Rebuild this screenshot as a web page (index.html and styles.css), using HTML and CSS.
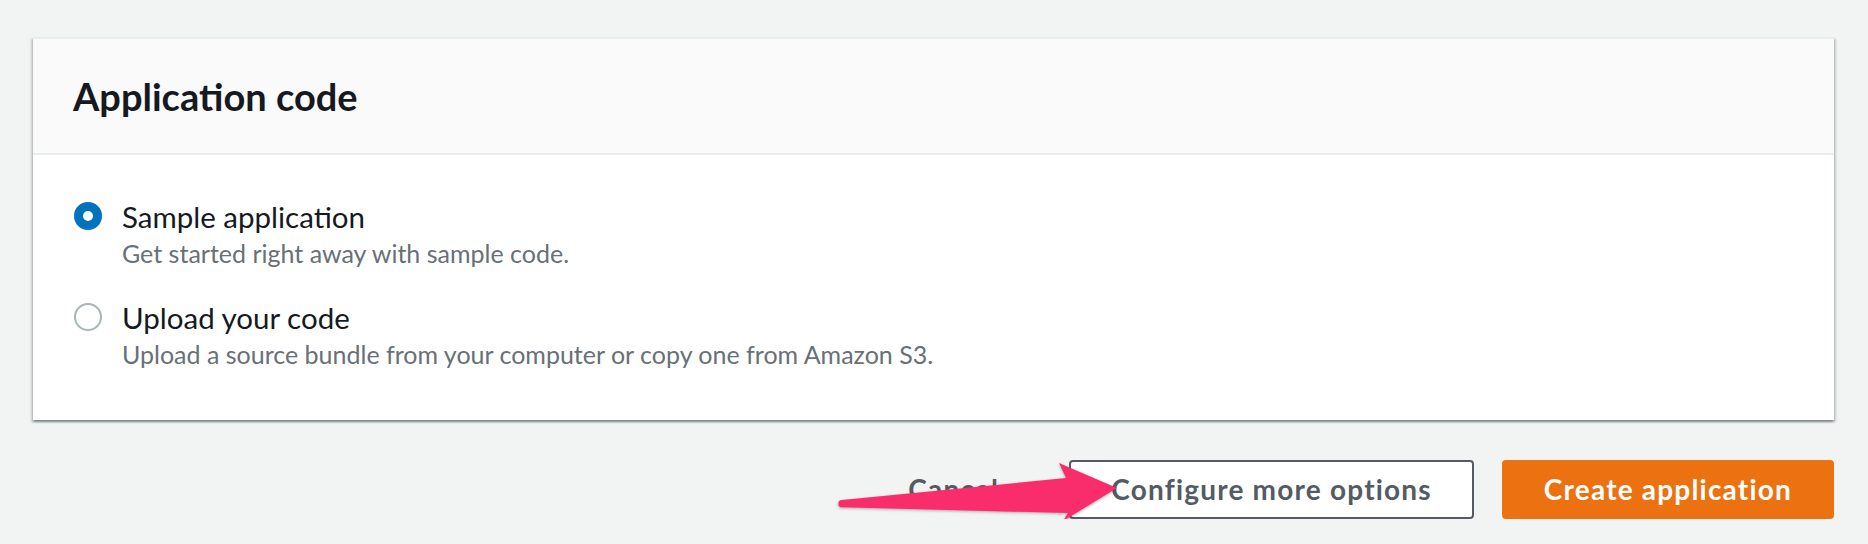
FILE: index.html
```html
<!DOCTYPE html>
<html lang="en">
<head>
<meta charset="utf-8">
<title>Application code</title>
<link rel="stylesheet" href="styles.css">
</head>
<body>
<div class="page">
  <section class="card">
    <header class="card-header">
      <h2 class="card-title">Application code</h2>
    </header>
    <div class="card-body">
      <div class="option">
        <span class="radio radio-checked"></span>
        <span class="option-text">
          <span class="option-label">Sample application</span>
          <span class="option-desc">Get started right away with sample code.</span>
        </span>
      </div>
      <div class="option">
        <span class="radio"></span>
        <span class="option-text">
          <span class="option-label">Upload your code</span>
          <span class="option-desc">Upload a source bundle from your computer or copy one from Amazon S3.</span>
        </span>
      </div>
    </div>
  </section>
  <div class="actions">
    <button class="btn btn-link">Cancel</button>
    <button class="btn btn-normal">Configure more options</button>
    <button class="btn btn-primary">Create application</button>
  </div>
  <svg class="arrow" width="300" height="75" viewBox="830 455 300 75" aria-hidden="true">
    <path d="M842 500 L1066 478 L1059 463 L1117 488 L1063 521 L1068 513 L842 507.3 A3.6 3.6 0 0 1 842 500 Z" fill="#fa2d6c"/>
  </svg>
</div>
</body>
</html>
```
FILE: styles.css
```css
html, body {
  margin: 0;
  padding: 0;
  background: #f2f3f3;
}

body {
  font-family: Lato, "Open Sans", "Liberation Sans", sans-serif;
  color: #16191f;
}

.page {
  position: relative;
  padding: 37px 34px 0 33px;
}

.card {
  background: #ffffff;
  border-top: 2px solid #eaeded;
  box-shadow: 0 2px 2px 0 rgba(0, 28, 36, 0.3),
              2px 2px 2px 0 rgba(0, 28, 36, 0.15),
              -2px 2px 2px 0 rgba(0, 28, 36, 0.15);
}

.card-header {
  background: #fafafa;
  border-bottom: 2px solid #eaeded;
  padding: 35px 40px;
}

.card-title {
  margin: 0;
  font-size: 38px;
  line-height: 44px;
  font-weight: 700;
  color: #16191f;
}

.card-body {
  padding: 40px 40px 52px 41px;
  display: flex;
  flex-direction: column;
  gap: 29px;
}

.option {
  display: flex;
  align-items: flex-start;
  gap: 20px;
}

.radio {
  flex: none;
  box-sizing: border-box;
  width: 28px;
  height: 28px;
  margin-top: 7px;
  border-radius: 50%;
  border: 2px solid #aab7b8;
  background: #ffffff;
}

.radio-checked {
  border: 9px solid #0073bb;
}

.option-text {
  display: flex;
  flex-direction: column;
}

.option-label {
  font-size: 29.5px;
  line-height: 44px;
  color: #16191f;
}

.option-desc {
  font-size: 25px;
  line-height: 28px;
  color: #687078;
}

.actions {
  margin-top: 40px;
  display: flex;
  justify-content: flex-end;
  gap: 28px;
}

.btn {
  font-family: Lato, "Open Sans", "Liberation Sans", sans-serif;
  font-size: 28px;
  font-weight: 700;
  letter-spacing: 1.2px;
  line-height: 43px;
  padding: 6px 40px;
  border: 2px solid transparent;
  border-radius: 4px;
  background: transparent;
  color: #545b64;
  cursor: pointer;
}

.btn-normal {
  background: #ffffff;
  border-color: #545b64;
}

.btn-primary {
  background: #ec7211;
  border-color: #ec7211;
  color: #ffffff;
}

.arrow {
  position: absolute;
  left: 830px;
  top: 455px;
  filter: drop-shadow(0 1px 1.5px rgba(0, 0, 0, 0.3));
}
```
